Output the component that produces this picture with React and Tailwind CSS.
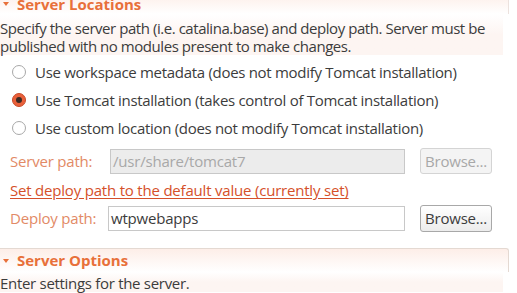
export default function App() {
    const radios = [
        { label: 'Use workspace metadata (does not modify Tomcat installation)', checked: false },
        { label: 'Use Tomcat installation (takes control of Tomcat installation)', checked: true },
        { label: 'Use custom location (does not modify Tomcat installation)', checked: false },
    ];

    return (
        <div className="w-[517px] h-[293px] overflow-hidden bg-white text-[15px] text-[#3c3c3c]" style={{ fontFamily: '"Open Sans", "Noto Sans", sans-serif' }}>
            {/* Server Locations */}
            <div className="-mt-[6px] w-[509px] h-[20px] flex items-center border-r border-[#ece2de] bg-gradient-to-b from-[#fdeee8] to-white">
                <span className="ml-[3px] mr-[8px] w-0 h-0 border-l-[3px] border-r-[3px] border-t-[4px] border-l-transparent border-r-transparent border-t-[#e8703a]" />
                <span className="font-bold text-[#e8703a] leading-none">Server Locations</span>
            </div>
            <div className="w-[503px] pt-[5px] leading-[18px] tracking-[-0.45px] whitespace-nowrap bg-gradient-to-b from-white via-[#fdf5f2] to-[#fdf5f2]">
                <div>Specify the server path (i.e. catalina.base) and deploy path. Server must be</div>
                <div>published with no modules present to make changes.</div>
            </div>

            <div className="flex flex-col gap-[10px] mt-[8px] pl-[12px]">
                {radios.map((r) => (
                    <div key={r.label} className="flex items-center h-[18px] gap-[9px]">
                        {r.checked ? (
                            <span className="w-[14px] h-[14px] rounded-full bg-[#e9603a] border border-[#c84a28] flex items-center justify-center">
                                <span className="w-[6px] h-[6px] rounded-full bg-[#3a2a24]" />
                            </span>
                        ) : (
                            <span className="w-[14px] h-[14px] rounded-full border border-[#a8a8a8] bg-white" />
                        )}
                        <span className="tracking-[-0.3px]">{r.label}</span>
                    </div>
                ))}
            </div>

            <div className="flex items-center mt-[11px] pl-[10px] h-[26px]">
                <span className="w-[100px] text-[#e28a66] tracking-[-0.2px]">Server path:</span>
                <div className="w-[295px] h-[25px] border border-[#c8c8c8] bg-[#ececec] flex items-center px-[2px] text-[#a8a8a8] tracking-[-0.2px]">/usr/share/tomcat7</div>
                <button className="ml-[15px] w-[72px] h-[26px] rounded-[3px] border border-[#d4d4d4] bg-[#f4f4f4] text-[#a8a8a8] tracking-[-0.2px]">Browse...</button>
            </div>

            <div className="pl-[10px] mt-[5px] h-[22px] leading-[22px]">
                <span className="text-[#d5502a] underline underline-offset-2 tracking-[-0.2px]">Set deploy path to the default value (currently set)</span>
            </div>

            <div className="flex items-center mt-[4px] pl-[10px] h-[26px]">
                <span className="w-[98px] text-[#e28a66] tracking-[-0.2px]">Deploy path:</span>
                <div className="w-[297px] h-[25px] border border-[#c8c8c8] bg-white flex items-center px-[2px] text-[#3c3c3c] tracking-[-0.2px]">wtpwebapps</div>
                <button className="ml-[15px] w-[72px] h-[27px] rounded-[3px] border border-[#a8a8a8] bg-gradient-to-b from-white to-[#ececec] text-[#3c3c3c] tracking-[-0.2px]">Browse...</button>
            </div>

            {/* Server Options */}
            <div className="mt-[17px] w-[509px] h-[24px] flex items-center border-t border-r border-[#e4d9d2] rounded-tr-[3px] bg-gradient-to-b from-[#fdeee8] to-white">
                <span className="ml-[3px] mr-[8px] w-0 h-0 border-l-[3px] border-r-[3px] border-t-[4px] border-l-transparent border-r-transparent border-t-[#e8703a]" />
                <span className="font-bold text-[#e8703a] leading-none">Server Options</span>
            </div>
            <div className="w-[503px] pt-[3px] leading-[17px] tracking-[-0.3px] bg-gradient-to-b from-white via-[#fdf5f2] to-[#fdf5f2]">
                Enter settings for the server.
            </div>
        </div>
    );
}
